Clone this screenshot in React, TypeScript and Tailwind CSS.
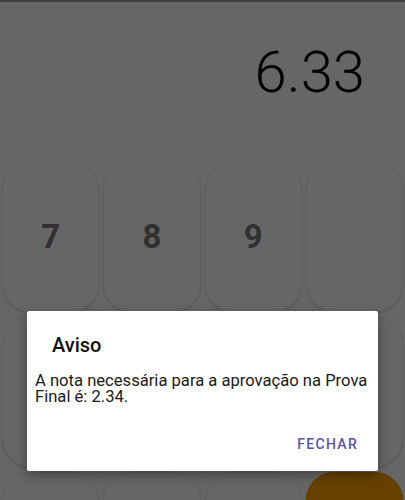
import React from "react";

const keys = [
  ["7", "8", "9", ""],
  ["", "", "", ""],
  ["", "", "", "="],
];

function Key({ label, accent }: { label: string; accent?: boolean }) {
  return (
    <div
      className={`flex h-[150px] items-center justify-center rounded-[28px] border shadow-[0_1px_2px_rgba(0,0,0,0.18)] ${
        accent ? "border-[#f29a00] bg-[#ffa200]" : "border-[#f2f2f2] bg-white"
      }`}
    >
      {!accent && label && <span className="text-[33px] font-bold text-[#7a7a7a]">{label}</span>}
    </div>
  );
}

export default function App() {
  return (
    <div className="relative h-[500px] w-[405px] overflow-hidden bg-white font-['Roboto',sans-serif]">
      <div className="h-[2px] bg-[#9a9a9a]" />
      <div className="flex h-[160px] justify-end pr-[40px] pt-[30px]">
        <span className="text-[58px] font-light leading-[80px] text-black">6.33</span>
      </div>
      <div className="grid grid-cols-4 gap-x-[4px] gap-y-[5px] px-[2px]">
        {keys.flat().map((k, i) => (
          <Key key={i} label={k} accent={k === "="} />
        ))}
      </div>

      {/* dim + dialog */}
      <div className="absolute inset-0 bg-black/60" />
      <div className="absolute left-[27px] top-[311px] w-[351px] rounded-[2px] bg-white pb-[16px] shadow-[0_4px_12px_rgba(0,0,0,0.35)]">
        <div className="pl-[25px] pt-[20px] text-[20px] font-medium leading-[28px] text-[#111]">Aviso</div>
        <p className="mt-[14px] px-[8px] text-[16.6px] leading-[16px] text-[#1a1a1a]">
          A nota necessária para a aprovação na Prova Final é: 2.34.
        </p>
        <div className="mt-[29px] flex justify-end pr-[20px]">
          <span className="text-[14px] font-medium tracking-[1.3px] text-[#5f4fa8]">FECHAR</span>
        </div>
      </div>
    </div>
  );
}
